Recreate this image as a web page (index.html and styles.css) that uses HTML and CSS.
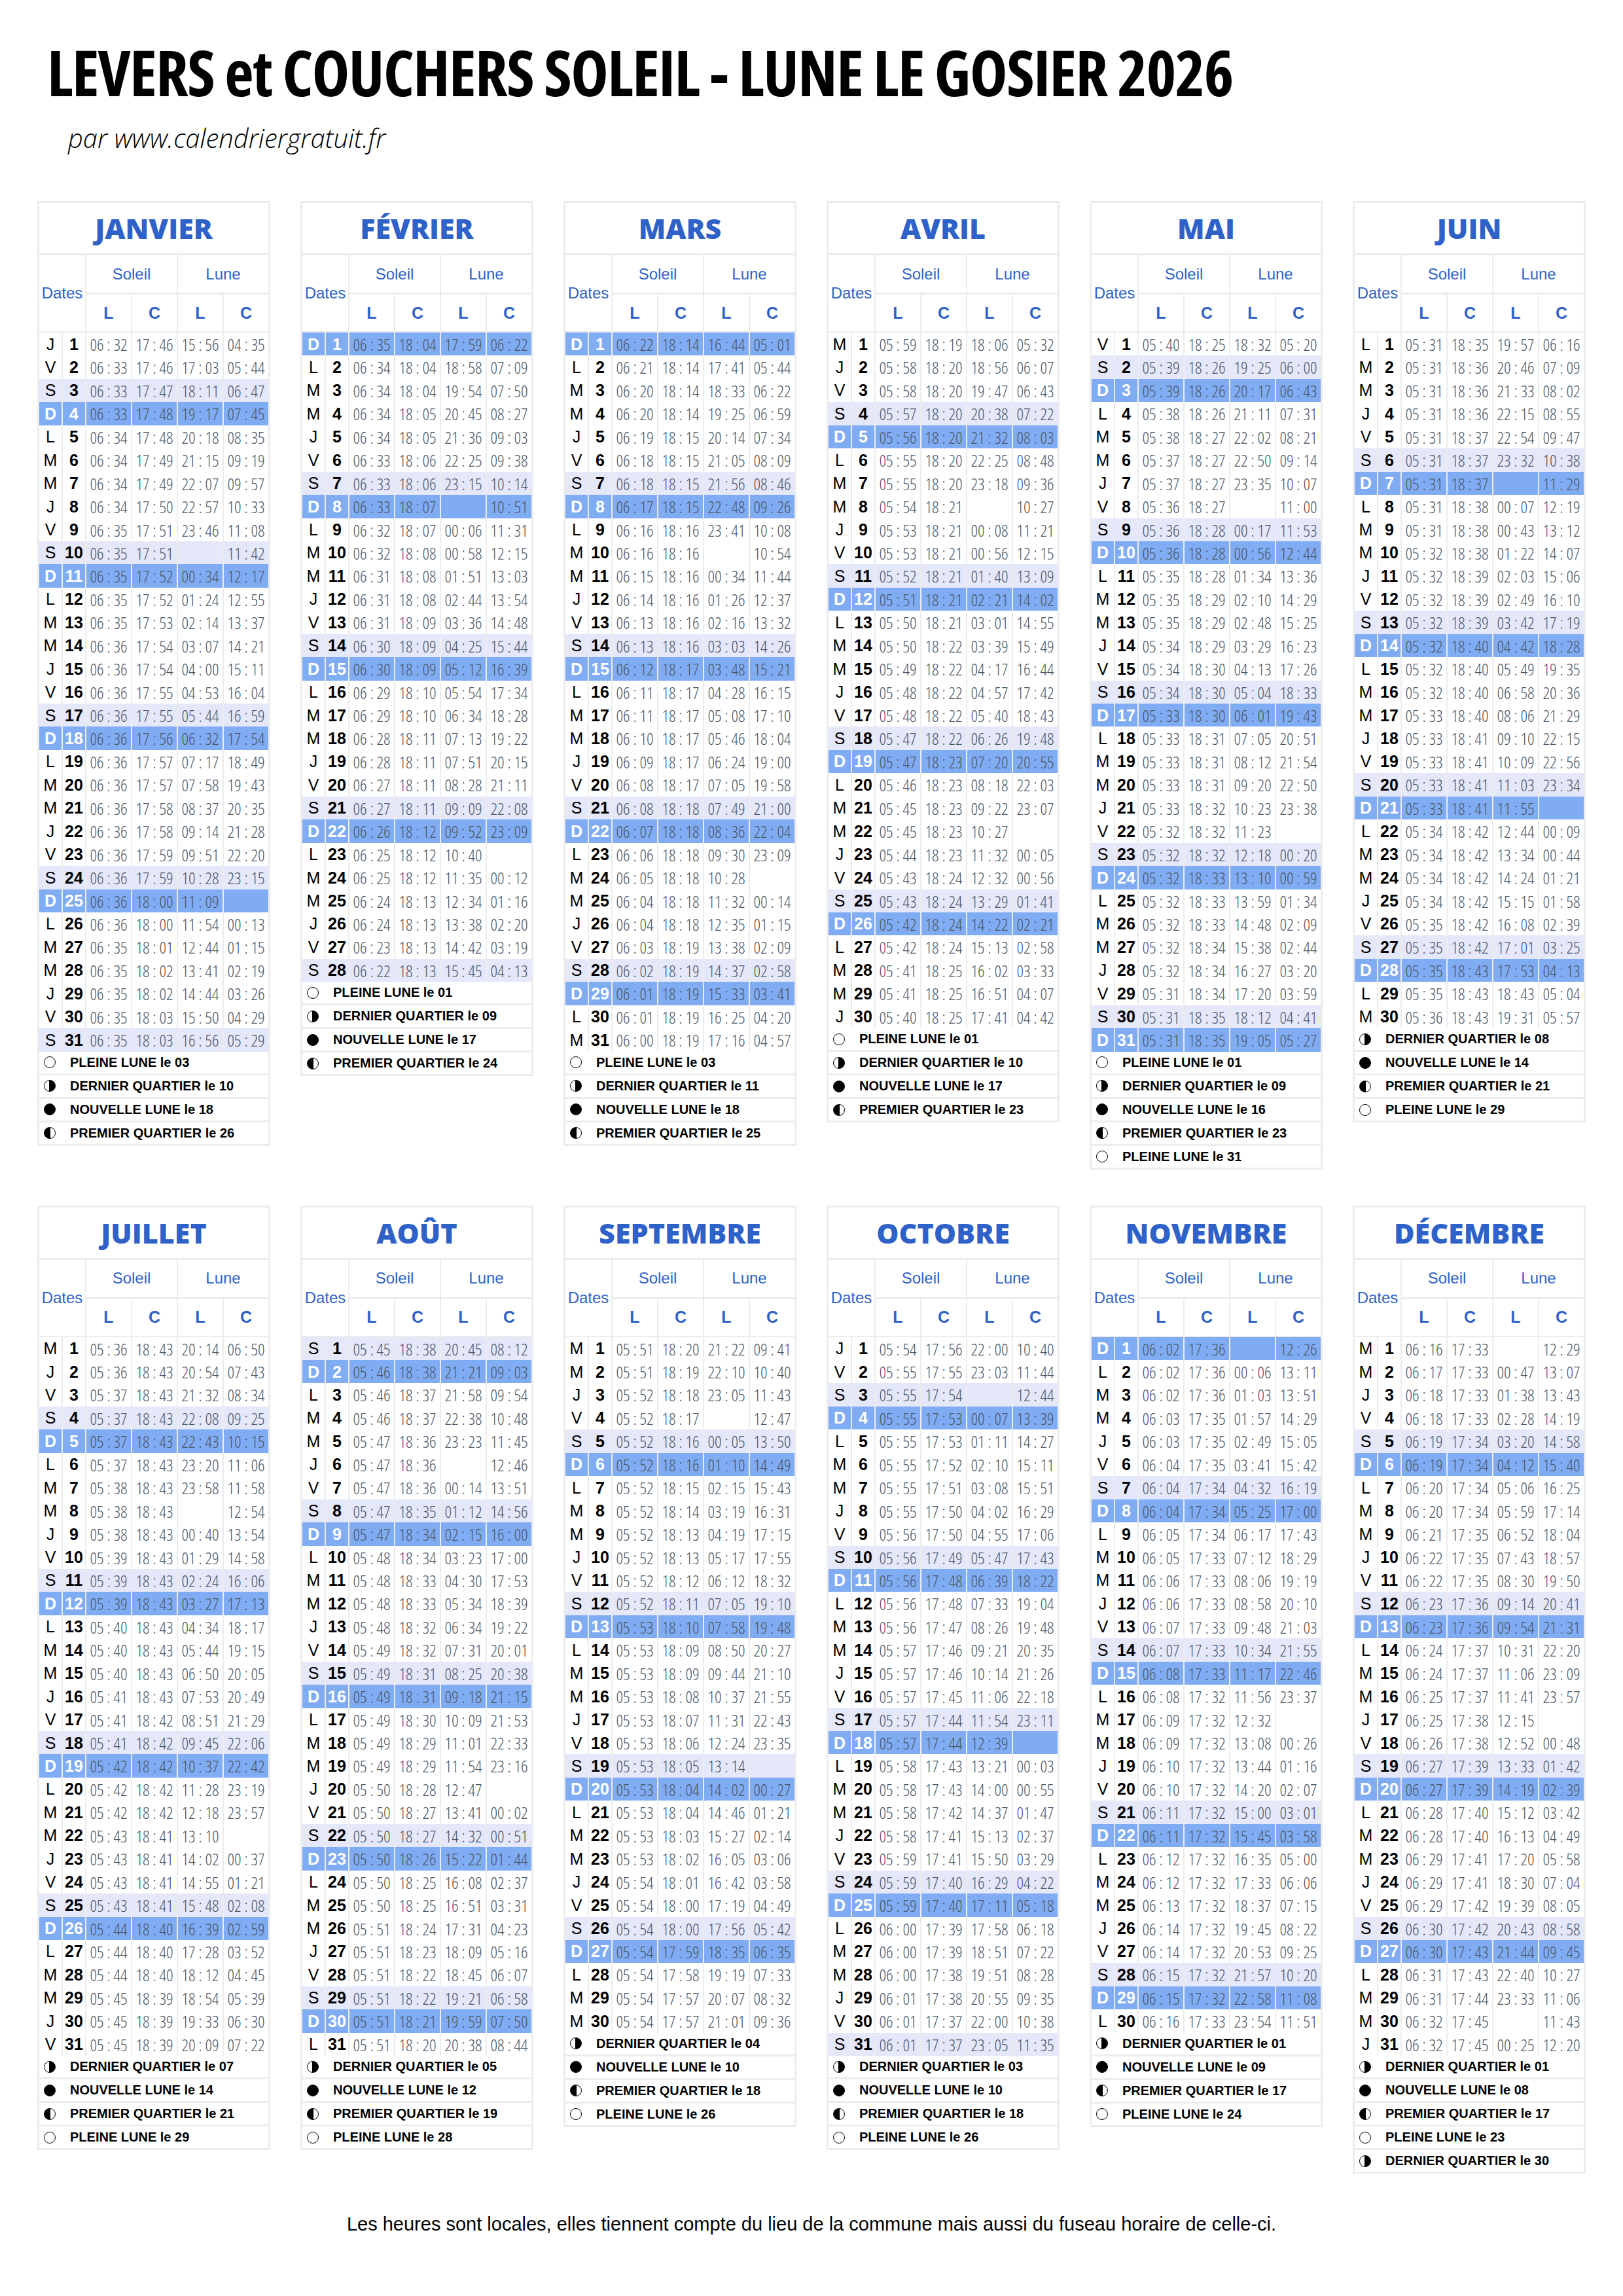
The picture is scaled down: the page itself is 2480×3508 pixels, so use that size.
FILE: index.html
```html
<!DOCTYPE html>
<html lang="fr">
<head>
<meta charset="utf-8">
<title>Levers et couchers soleil - lune Le Gosier 2026</title>
<link rel="stylesheet" href="styles.css">
</head>
<body>
<header class="top">
<h1 class="title">LEVERS et COUCHERS SOLEIL - LUNE LE GOSIER 2026</h1>
<p class="sub">par www.calendriergratuit.fr</p>
</header>
<main class="cal">

<section class="m">
<div class="mt">JANVIER</div>
<div class="h"><div class="dt">Dates</div><div class="so">Soleil</div><div class="lu">Lune</div><div class="lc">L</div><div class="lc">C</div><div class="lc">L</div><div class="lc">C</div></div>
<div class="r"><b>J</b><b>1</b><i>06 : 32</i><i>17 : 46</i><i>15 : 56</i><i>04 : 35</i></div>
<div class="r"><b>V</b><b>2</b><i>06 : 33</i><i>17 : 46</i><i>17 : 03</i><i>05 : 44</i></div>
<div class="r s"><b>S</b><b>3</b><i>06 : 33</i><i>17 : 47</i><i>18 : 11</i><i>06 : 47</i></div>
<div class="r d"><b>D</b><b>4</b><i>06 : 33</i><i>17 : 48</i><i>19 : 17</i><i>07 : 45</i></div>
<div class="r"><b>L</b><b>5</b><i>06 : 34</i><i>17 : 48</i><i>20 : 18</i><i>08 : 35</i></div>
<div class="r"><b>M</b><b>6</b><i>06 : 34</i><i>17 : 49</i><i>21 : 15</i><i>09 : 19</i></div>
<div class="r"><b>M</b><b>7</b><i>06 : 34</i><i>17 : 49</i><i>22 : 07</i><i>09 : 57</i></div>
<div class="r"><b>J</b><b>8</b><i>06 : 34</i><i>17 : 50</i><i>22 : 57</i><i>10 : 33</i></div>
<div class="r"><b>V</b><b>9</b><i>06 : 35</i><i>17 : 51</i><i>23 : 46</i><i>11 : 08</i></div>
<div class="r s"><b>S</b><b>10</b><i>06 : 35</i><i>17 : 51</i><i></i><i>11 : 42</i></div>
<div class="r d"><b>D</b><b>11</b><i>06 : 35</i><i>17 : 52</i><i>00 : 34</i><i>12 : 17</i></div>
<div class="r"><b>L</b><b>12</b><i>06 : 35</i><i>17 : 52</i><i>01 : 24</i><i>12 : 55</i></div>
<div class="r"><b>M</b><b>13</b><i>06 : 35</i><i>17 : 53</i><i>02 : 14</i><i>13 : 37</i></div>
<div class="r"><b>M</b><b>14</b><i>06 : 36</i><i>17 : 54</i><i>03 : 07</i><i>14 : 21</i></div>
<div class="r"><b>J</b><b>15</b><i>06 : 36</i><i>17 : 54</i><i>04 : 00</i><i>15 : 11</i></div>
<div class="r"><b>V</b><b>16</b><i>06 : 36</i><i>17 : 55</i><i>04 : 53</i><i>16 : 04</i></div>
<div class="r s"><b>S</b><b>17</b><i>06 : 36</i><i>17 : 55</i><i>05 : 44</i><i>16 : 59</i></div>
<div class="r d"><b>D</b><b>18</b><i>06 : 36</i><i>17 : 56</i><i>06 : 32</i><i>17 : 54</i></div>
<div class="r"><b>L</b><b>19</b><i>06 : 36</i><i>17 : 57</i><i>07 : 17</i><i>18 : 49</i></div>
<div class="r"><b>M</b><b>20</b><i>06 : 36</i><i>17 : 57</i><i>07 : 58</i><i>19 : 43</i></div>
<div class="r"><b>M</b><b>21</b><i>06 : 36</i><i>17 : 58</i><i>08 : 37</i><i>20 : 35</i></div>
<div class="r"><b>J</b><b>22</b><i>06 : 36</i><i>17 : 58</i><i>09 : 14</i><i>21 : 28</i></div>
<div class="r"><b>V</b><b>23</b><i>06 : 36</i><i>17 : 59</i><i>09 : 51</i><i>22 : 20</i></div>
<div class="r s"><b>S</b><b>24</b><i>06 : 36</i><i>17 : 59</i><i>10 : 28</i><i>23 : 15</i></div>
<div class="r d"><b>D</b><b>25</b><i>06 : 36</i><i>18 : 00</i><i>11 : 09</i><i></i></div>
<div class="r"><b>L</b><b>26</b><i>06 : 36</i><i>18 : 00</i><i>11 : 54</i><i>00 : 13</i></div>
<div class="r"><b>M</b><b>27</b><i>06 : 35</i><i>18 : 01</i><i>12 : 44</i><i>01 : 15</i></div>
<div class="r"><b>M</b><b>28</b><i>06 : 35</i><i>18 : 02</i><i>13 : 41</i><i>02 : 19</i></div>
<div class="r"><b>J</b><b>29</b><i>06 : 35</i><i>18 : 02</i><i>14 : 44</i><i>03 : 26</i></div>
<div class="r"><b>V</b><b>30</b><i>06 : 35</i><i>18 : 03</i><i>15 : 50</i><i>04 : 29</i></div>
<div class="r s"><b>S</b><b>31</b><i>06 : 35</i><i>18 : 03</i><i>16 : 56</i><i>05 : 29</i></div>
<div class="lg">
<div><span class="ic pl"></span>PLEINE LUNE le 03</div>
<div><span class="ic dq"></span>DERNIER QUARTIER le 10</div>
<div><span class="ic nl"></span>NOUVELLE LUNE le 18</div>
<div><span class="ic pq"></span>PREMIER QUARTIER le 26</div>
</div>
</section>

<section class="m">
<div class="mt">FÉVRIER</div>
<div class="h"><div class="dt">Dates</div><div class="so">Soleil</div><div class="lu">Lune</div><div class="lc">L</div><div class="lc">C</div><div class="lc">L</div><div class="lc">C</div></div>
<div class="r d"><b>D</b><b>1</b><i>06 : 35</i><i>18 : 04</i><i>17 : 59</i><i>06 : 22</i></div>
<div class="r"><b>L</b><b>2</b><i>06 : 34</i><i>18 : 04</i><i>18 : 58</i><i>07 : 09</i></div>
<div class="r"><b>M</b><b>3</b><i>06 : 34</i><i>18 : 04</i><i>19 : 54</i><i>07 : 50</i></div>
<div class="r"><b>M</b><b>4</b><i>06 : 34</i><i>18 : 05</i><i>20 : 45</i><i>08 : 27</i></div>
<div class="r"><b>J</b><b>5</b><i>06 : 34</i><i>18 : 05</i><i>21 : 36</i><i>09 : 03</i></div>
<div class="r"><b>V</b><b>6</b><i>06 : 33</i><i>18 : 06</i><i>22 : 25</i><i>09 : 38</i></div>
<div class="r s"><b>S</b><b>7</b><i>06 : 33</i><i>18 : 06</i><i>23 : 15</i><i>10 : 14</i></div>
<div class="r d"><b>D</b><b>8</b><i>06 : 33</i><i>18 : 07</i><i></i><i>10 : 51</i></div>
<div class="r"><b>L</b><b>9</b><i>06 : 32</i><i>18 : 07</i><i>00 : 06</i><i>11 : 31</i></div>
<div class="r"><b>M</b><b>10</b><i>06 : 32</i><i>18 : 08</i><i>00 : 58</i><i>12 : 15</i></div>
<div class="r"><b>M</b><b>11</b><i>06 : 31</i><i>18 : 08</i><i>01 : 51</i><i>13 : 03</i></div>
<div class="r"><b>J</b><b>12</b><i>06 : 31</i><i>18 : 08</i><i>02 : 44</i><i>13 : 54</i></div>
<div class="r"><b>V</b><b>13</b><i>06 : 31</i><i>18 : 09</i><i>03 : 36</i><i>14 : 48</i></div>
<div class="r s"><b>S</b><b>14</b><i>06 : 30</i><i>18 : 09</i><i>04 : 25</i><i>15 : 44</i></div>
<div class="r d"><b>D</b><b>15</b><i>06 : 30</i><i>18 : 09</i><i>05 : 12</i><i>16 : 39</i></div>
<div class="r"><b>L</b><b>16</b><i>06 : 29</i><i>18 : 10</i><i>05 : 54</i><i>17 : 34</i></div>
<div class="r"><b>M</b><b>17</b><i>06 : 29</i><i>18 : 10</i><i>06 : 34</i><i>18 : 28</i></div>
<div class="r"><b>M</b><b>18</b><i>06 : 28</i><i>18 : 11</i><i>07 : 13</i><i>19 : 22</i></div>
<div class="r"><b>J</b><b>19</b><i>06 : 28</i><i>18 : 11</i><i>07 : 51</i><i>20 : 15</i></div>
<div class="r"><b>V</b><b>20</b><i>06 : 27</i><i>18 : 11</i><i>08 : 28</i><i>21 : 11</i></div>
<div class="r s"><b>S</b><b>21</b><i>06 : 27</i><i>18 : 11</i><i>09 : 09</i><i>22 : 08</i></div>
<div class="r d"><b>D</b><b>22</b><i>06 : 26</i><i>18 : 12</i><i>09 : 52</i><i>23 : 09</i></div>
<div class="r"><b>L</b><b>23</b><i>06 : 25</i><i>18 : 12</i><i>10 : 40</i><i></i></div>
<div class="r"><b>M</b><b>24</b><i>06 : 25</i><i>18 : 12</i><i>11 : 35</i><i>00 : 12</i></div>
<div class="r"><b>M</b><b>25</b><i>06 : 24</i><i>18 : 13</i><i>12 : 34</i><i>01 : 16</i></div>
<div class="r"><b>J</b><b>26</b><i>06 : 24</i><i>18 : 13</i><i>13 : 38</i><i>02 : 20</i></div>
<div class="r"><b>V</b><b>27</b><i>06 : 23</i><i>18 : 13</i><i>14 : 42</i><i>03 : 19</i></div>
<div class="r s"><b>S</b><b>28</b><i>06 : 22</i><i>18 : 13</i><i>15 : 45</i><i>04 : 13</i></div>
<div class="lg">
<div><span class="ic pl"></span>PLEINE LUNE le 01</div>
<div><span class="ic dq"></span>DERNIER QUARTIER le 09</div>
<div><span class="ic nl"></span>NOUVELLE LUNE le 17</div>
<div><span class="ic pq"></span>PREMIER QUARTIER le 24</div>
</div>
</section>

<section class="m">
<div class="mt">MARS</div>
<div class="h"><div class="dt">Dates</div><div class="so">Soleil</div><div class="lu">Lune</div><div class="lc">L</div><div class="lc">C</div><div class="lc">L</div><div class="lc">C</div></div>
<div class="r d"><b>D</b><b>1</b><i>06 : 22</i><i>18 : 14</i><i>16 : 44</i><i>05 : 01</i></div>
<div class="r"><b>L</b><b>2</b><i>06 : 21</i><i>18 : 14</i><i>17 : 41</i><i>05 : 44</i></div>
<div class="r"><b>M</b><b>3</b><i>06 : 20</i><i>18 : 14</i><i>18 : 33</i><i>06 : 22</i></div>
<div class="r"><b>M</b><b>4</b><i>06 : 20</i><i>18 : 14</i><i>19 : 25</i><i>06 : 59</i></div>
<div class="r"><b>J</b><b>5</b><i>06 : 19</i><i>18 : 15</i><i>20 : 14</i><i>07 : 34</i></div>
<div class="r"><b>V</b><b>6</b><i>06 : 18</i><i>18 : 15</i><i>21 : 05</i><i>08 : 09</i></div>
<div class="r s"><b>S</b><b>7</b><i>06 : 18</i><i>18 : 15</i><i>21 : 56</i><i>08 : 46</i></div>
<div class="r d"><b>D</b><b>8</b><i>06 : 17</i><i>18 : 15</i><i>22 : 48</i><i>09 : 26</i></div>
<div class="r"><b>L</b><b>9</b><i>06 : 16</i><i>18 : 16</i><i>23 : 41</i><i>10 : 08</i></div>
<div class="r"><b>M</b><b>10</b><i>06 : 16</i><i>18 : 16</i><i></i><i>10 : 54</i></div>
<div class="r"><b>M</b><b>11</b><i>06 : 15</i><i>18 : 16</i><i>00 : 34</i><i>11 : 44</i></div>
<div class="r"><b>J</b><b>12</b><i>06 : 14</i><i>18 : 16</i><i>01 : 26</i><i>12 : 37</i></div>
<div class="r"><b>V</b><b>13</b><i>06 : 13</i><i>18 : 16</i><i>02 : 16</i><i>13 : 32</i></div>
<div class="r s"><b>S</b><b>14</b><i>06 : 13</i><i>18 : 16</i><i>03 : 03</i><i>14 : 26</i></div>
<div class="r d"><b>D</b><b>15</b><i>06 : 12</i><i>18 : 17</i><i>03 : 48</i><i>15 : 21</i></div>
<div class="r"><b>L</b><b>16</b><i>06 : 11</i><i>18 : 17</i><i>04 : 28</i><i>16 : 15</i></div>
<div class="r"><b>M</b><b>17</b><i>06 : 11</i><i>18 : 17</i><i>05 : 08</i><i>17 : 10</i></div>
<div class="r"><b>M</b><b>18</b><i>06 : 10</i><i>18 : 17</i><i>05 : 46</i><i>18 : 04</i></div>
<div class="r"><b>J</b><b>19</b><i>06 : 09</i><i>18 : 17</i><i>06 : 24</i><i>19 : 00</i></div>
<div class="r"><b>V</b><b>20</b><i>06 : 08</i><i>18 : 17</i><i>07 : 05</i><i>19 : 58</i></div>
<div class="r s"><b>S</b><b>21</b><i>06 : 08</i><i>18 : 18</i><i>07 : 49</i><i>21 : 00</i></div>
<div class="r d"><b>D</b><b>22</b><i>06 : 07</i><i>18 : 18</i><i>08 : 36</i><i>22 : 04</i></div>
<div class="r"><b>L</b><b>23</b><i>06 : 06</i><i>18 : 18</i><i>09 : 30</i><i>23 : 09</i></div>
<div class="r"><b>M</b><b>24</b><i>06 : 05</i><i>18 : 18</i><i>10 : 28</i><i></i></div>
<div class="r"><b>M</b><b>25</b><i>06 : 04</i><i>18 : 18</i><i>11 : 32</i><i>00 : 14</i></div>
<div class="r"><b>J</b><b>26</b><i>06 : 04</i><i>18 : 18</i><i>12 : 35</i><i>01 : 15</i></div>
<div class="r"><b>V</b><b>27</b><i>06 : 03</i><i>18 : 19</i><i>13 : 38</i><i>02 : 09</i></div>
<div class="r s"><b>S</b><b>28</b><i>06 : 02</i><i>18 : 19</i><i>14 : 37</i><i>02 : 58</i></div>
<div class="r d"><b>D</b><b>29</b><i>06 : 01</i><i>18 : 19</i><i>15 : 33</i><i>03 : 41</i></div>
<div class="r"><b>L</b><b>30</b><i>06 : 01</i><i>18 : 19</i><i>16 : 25</i><i>04 : 20</i></div>
<div class="r"><b>M</b><b>31</b><i>06 : 00</i><i>18 : 19</i><i>17 : 16</i><i>04 : 57</i></div>
<div class="lg">
<div><span class="ic pl"></span>PLEINE LUNE le 03</div>
<div><span class="ic dq"></span>DERNIER QUARTIER le 11</div>
<div><span class="ic nl"></span>NOUVELLE LUNE le 18</div>
<div><span class="ic pq"></span>PREMIER QUARTIER le 25</div>
</div>
</section>

<section class="m">
<div class="mt">AVRIL</div>
<div class="h"><div class="dt">Dates</div><div class="so">Soleil</div><div class="lu">Lune</div><div class="lc">L</div><div class="lc">C</div><div class="lc">L</div><div class="lc">C</div></div>
<div class="r"><b>M</b><b>1</b><i>05 : 59</i><i>18 : 19</i><i>18 : 06</i><i>05 : 32</i></div>
<div class="r"><b>J</b><b>2</b><i>05 : 58</i><i>18 : 20</i><i>18 : 56</i><i>06 : 07</i></div>
<div class="r"><b>V</b><b>3</b><i>05 : 58</i><i>18 : 20</i><i>19 : 47</i><i>06 : 43</i></div>
<div class="r s"><b>S</b><b>4</b><i>05 : 57</i><i>18 : 20</i><i>20 : 38</i><i>07 : 22</i></div>
<div class="r d"><b>D</b><b>5</b><i>05 : 56</i><i>18 : 20</i><i>21 : 32</i><i>08 : 03</i></div>
<div class="r"><b>L</b><b>6</b><i>05 : 55</i><i>18 : 20</i><i>22 : 25</i><i>08 : 48</i></div>
<div class="r"><b>M</b><b>7</b><i>05 : 55</i><i>18 : 20</i><i>23 : 18</i><i>09 : 36</i></div>
<div class="r"><b>M</b><b>8</b><i>05 : 54</i><i>18 : 21</i><i></i><i>10 : 27</i></div>
<div class="r"><b>J</b><b>9</b><i>05 : 53</i><i>18 : 21</i><i>00 : 08</i><i>11 : 21</i></div>
<div class="r"><b>V</b><b>10</b><i>05 : 53</i><i>18 : 21</i><i>00 : 56</i><i>12 : 15</i></div>
<div class="r s"><b>S</b><b>11</b><i>05 : 52</i><i>18 : 21</i><i>01 : 40</i><i>13 : 09</i></div>
<div class="r d"><b>D</b><b>12</b><i>05 : 51</i><i>18 : 21</i><i>02 : 21</i><i>14 : 02</i></div>
<div class="r"><b>L</b><b>13</b><i>05 : 50</i><i>18 : 21</i><i>03 : 01</i><i>14 : 55</i></div>
<div class="r"><b>M</b><b>14</b><i>05 : 50</i><i>18 : 22</i><i>03 : 39</i><i>15 : 49</i></div>
<div class="r"><b>M</b><b>15</b><i>05 : 49</i><i>18 : 22</i><i>04 : 17</i><i>16 : 44</i></div>
<div class="r"><b>J</b><b>16</b><i>05 : 48</i><i>18 : 22</i><i>04 : 57</i><i>17 : 42</i></div>
<div class="r"><b>V</b><b>17</b><i>05 : 48</i><i>18 : 22</i><i>05 : 40</i><i>18 : 43</i></div>
<div class="r s"><b>S</b><b>18</b><i>05 : 47</i><i>18 : 22</i><i>06 : 26</i><i>19 : 48</i></div>
<div class="r d"><b>D</b><b>19</b><i>05 : 47</i><i>18 : 23</i><i>07 : 20</i><i>20 : 55</i></div>
<div class="r"><b>L</b><b>20</b><i>05 : 46</i><i>18 : 23</i><i>08 : 18</i><i>22 : 03</i></div>
<div class="r"><b>M</b><b>21</b><i>05 : 45</i><i>18 : 23</i><i>09 : 22</i><i>23 : 07</i></div>
<div class="r"><b>M</b><b>22</b><i>05 : 45</i><i>18 : 23</i><i>10 : 27</i><i></i></div>
<div class="r"><b>J</b><b>23</b><i>05 : 44</i><i>18 : 23</i><i>11 : 32</i><i>00 : 05</i></div>
<div class="r"><b>V</b><b>24</b><i>05 : 43</i><i>18 : 24</i><i>12 : 32</i><i>00 : 56</i></div>
<div class="r s"><b>S</b><b>25</b><i>05 : 43</i><i>18 : 24</i><i>13 : 29</i><i>01 : 41</i></div>
<div class="r d"><b>D</b><b>26</b><i>05 : 42</i><i>18 : 24</i><i>14 : 22</i><i>02 : 21</i></div>
<div class="r"><b>L</b><b>27</b><i>05 : 42</i><i>18 : 24</i><i>15 : 13</i><i>02 : 58</i></div>
<div class="r"><b>M</b><b>28</b><i>05 : 41</i><i>18 : 25</i><i>16 : 02</i><i>03 : 33</i></div>
<div class="r"><b>M</b><b>29</b><i>05 : 41</i><i>18 : 25</i><i>16 : 51</i><i>04 : 07</i></div>
<div class="r"><b>J</b><b>30</b><i>05 : 40</i><i>18 : 25</i><i>17 : 41</i><i>04 : 42</i></div>
<div class="lg">
<div><span class="ic pl"></span>PLEINE LUNE le 01</div>
<div><span class="ic dq"></span>DERNIER QUARTIER le 10</div>
<div><span class="ic nl"></span>NOUVELLE LUNE le 17</div>
<div><span class="ic pq"></span>PREMIER QUARTIER le 23</div>
</div>
</section>

<section class="m">
<div class="mt">MAI</div>
<div class="h"><div class="dt">Dates</div><div class="so">Soleil</div><div class="lu">Lune</div><div class="lc">L</div><div class="lc">C</div><div class="lc">L</div><div class="lc">C</div></div>
<div class="r"><b>V</b><b>1</b><i>05 : 40</i><i>18 : 25</i><i>18 : 32</i><i>05 : 20</i></div>
<div class="r s"><b>S</b><b>2</b><i>05 : 39</i><i>18 : 26</i><i>19 : 25</i><i>06 : 00</i></div>
<div class="r d"><b>D</b><b>3</b><i>05 : 39</i><i>18 : 26</i><i>20 : 17</i><i>06 : 43</i></div>
<div class="r"><b>L</b><b>4</b><i>05 : 38</i><i>18 : 26</i><i>21 : 11</i><i>07 : 31</i></div>
<div class="r"><b>M</b><b>5</b><i>05 : 38</i><i>18 : 27</i><i>22 : 02</i><i>08 : 21</i></div>
<div class="r"><b>M</b><b>6</b><i>05 : 37</i><i>18 : 27</i><i>22 : 50</i><i>09 : 14</i></div>
<div class="r"><b>J</b><b>7</b><i>05 : 37</i><i>18 : 27</i><i>23 : 35</i><i>10 : 07</i></div>
<div class="r"><b>V</b><b>8</b><i>05 : 36</i><i>18 : 27</i><i></i><i>11 : 00</i></div>
<div class="r s"><b>S</b><b>9</b><i>05 : 36</i><i>18 : 28</i><i>00 : 17</i><i>11 : 53</i></div>
<div class="r d"><b>D</b><b>10</b><i>05 : 36</i><i>18 : 28</i><i>00 : 56</i><i>12 : 44</i></div>
<div class="r"><b>L</b><b>11</b><i>05 : 35</i><i>18 : 28</i><i>01 : 34</i><i>13 : 36</i></div>
<div class="r"><b>M</b><b>12</b><i>05 : 35</i><i>18 : 29</i><i>02 : 10</i><i>14 : 29</i></div>
<div class="r"><b>M</b><b>13</b><i>05 : 35</i><i>18 : 29</i><i>02 : 48</i><i>15 : 25</i></div>
<div class="r"><b>J</b><b>14</b><i>05 : 34</i><i>18 : 29</i><i>03 : 29</i><i>16 : 23</i></div>
<div class="r"><b>V</b><b>15</b><i>05 : 34</i><i>18 : 30</i><i>04 : 13</i><i>17 : 26</i></div>
<div class="r s"><b>S</b><b>16</b><i>05 : 34</i><i>18 : 30</i><i>05 : 04</i><i>18 : 33</i></div>
<div class="r d"><b>D</b><b>17</b><i>05 : 33</i><i>18 : 30</i><i>06 : 01</i><i>19 : 43</i></div>
<div class="r"><b>L</b><b>18</b><i>05 : 33</i><i>18 : 31</i><i>07 : 05</i><i>20 : 51</i></div>
<div class="r"><b>M</b><b>19</b><i>05 : 33</i><i>18 : 31</i><i>08 : 12</i><i>21 : 54</i></div>
<div class="r"><b>M</b><b>20</b><i>05 : 33</i><i>18 : 31</i><i>09 : 20</i><i>22 : 50</i></div>
<div class="r"><b>J</b><b>21</b><i>05 : 33</i><i>18 : 32</i><i>10 : 23</i><i>23 : 38</i></div>
<div class="r"><b>V</b><b>22</b><i>05 : 32</i><i>18 : 32</i><i>11 : 23</i><i></i></div>
<div class="r s"><b>S</b><b>23</b><i>05 : 32</i><i>18 : 32</i><i>12 : 18</i><i>00 : 20</i></div>
<div class="r d"><b>D</b><b>24</b><i>05 : 32</i><i>18 : 33</i><i>13 : 10</i><i>00 : 59</i></div>
<div class="r"><b>L</b><b>25</b><i>05 : 32</i><i>18 : 33</i><i>13 : 59</i><i>01 : 34</i></div>
<div class="r"><b>M</b><b>26</b><i>05 : 32</i><i>18 : 33</i><i>14 : 48</i><i>02 : 09</i></div>
<div class="r"><b>M</b><b>27</b><i>05 : 32</i><i>18 : 34</i><i>15 : 38</i><i>02 : 44</i></div>
<div class="r"><b>J</b><b>28</b><i>05 : 32</i><i>18 : 34</i><i>16 : 27</i><i>03 : 20</i></div>
<div class="r"><b>V</b><b>29</b><i>05 : 31</i><i>18 : 34</i><i>17 : 20</i><i>03 : 59</i></div>
<div class="r s"><b>S</b><b>30</b><i>05 : 31</i><i>18 : 35</i><i>18 : 12</i><i>04 : 41</i></div>
<div class="r d"><b>D</b><b>31</b><i>05 : 31</i><i>18 : 35</i><i>19 : 05</i><i>05 : 27</i></div>
<div class="lg">
<div><span class="ic pl"></span>PLEINE LUNE le 01</div>
<div><span class="ic dq"></span>DERNIER QUARTIER le 09</div>
<div><span class="ic nl"></span>NOUVELLE LUNE le 16</div>
<div><span class="ic pq"></span>PREMIER QUARTIER le 23</div>
<div><span class="ic pl"></span>PLEINE LUNE le 31</div>
</div>
</section>

<section class="m">
<div class="mt">JUIN</div>
<div class="h"><div class="dt">Dates</div><div class="so">Soleil</div><div class="lu">Lune</div><div class="lc">L</div><div class="lc">C</div><div class="lc">L</div><div class="lc">C</div></div>
<div class="r"><b>L</b><b>1</b><i>05 : 31</i><i>18 : 35</i><i>19 : 57</i><i>06 : 16</i></div>
<div class="r"><b>M</b><b>2</b><i>05 : 31</i><i>18 : 36</i><i>20 : 46</i><i>07 : 09</i></div>
<div class="r"><b>M</b><b>3</b><i>05 : 31</i><i>18 : 36</i><i>21 : 33</i><i>08 : 02</i></div>
<div class="r"><b>J</b><b>4</b><i>05 : 31</i><i>18 : 36</i><i>22 : 15</i><i>08 : 55</i></div>
<div class="r"><b>V</b><b>5</b><i>05 : 31</i><i>18 : 37</i><i>22 : 54</i><i>09 : 47</i></div>
<div class="r s"><b>S</b><b>6</b><i>05 : 31</i><i>18 : 37</i><i>23 : 32</i><i>10 : 38</i></div>
<div class="r d"><b>D</b><b>7</b><i>05 : 31</i><i>18 : 37</i><i></i><i>11 : 29</i></div>
<div class="r"><b>L</b><b>8</b><i>05 : 31</i><i>18 : 38</i><i>00 : 07</i><i>12 : 19</i></div>
<div class="r"><b>M</b><b>9</b><i>05 : 31</i><i>18 : 38</i><i>00 : 43</i><i>13 : 12</i></div>
<div class="r"><b>M</b><b>10</b><i>05 : 32</i><i>18 : 38</i><i>01 : 22</i><i>14 : 07</i></div>
<div class="r"><b>J</b><b>11</b><i>05 : 32</i><i>18 : 39</i><i>02 : 03</i><i>15 : 06</i></div>
<div class="r"><b>V</b><b>12</b><i>05 : 32</i><i>18 : 39</i><i>02 : 49</i><i>16 : 10</i></div>
<div class="r s"><b>S</b><b>13</b><i>05 : 32</i><i>18 : 39</i><i>03 : 42</i><i>17 : 19</i></div>
<div class="r d"><b>D</b><b>14</b><i>05 : 32</i><i>18 : 40</i><i>04 : 42</i><i>18 : 28</i></div>
<div class="r"><b>L</b><b>15</b><i>05 : 32</i><i>18 : 40</i><i>05 : 49</i><i>19 : 35</i></div>
<div class="r"><b>M</b><b>16</b><i>05 : 32</i><i>18 : 40</i><i>06 : 58</i><i>20 : 36</i></div>
<div class="r"><b>M</b><b>17</b><i>05 : 33</i><i>18 : 40</i><i>08 : 06</i><i>21 : 29</i></div>
<div class="r"><b>J</b><b>18</b><i>05 : 33</i><i>18 : 41</i><i>09 : 10</i><i>22 : 15</i></div>
<div class="r"><b>V</b><b>19</b><i>05 : 33</i><i>18 : 41</i><i>10 : 09</i><i>22 : 56</i></div>
<div class="r s"><b>S</b><b>20</b><i>05 : 33</i><i>18 : 41</i><i>11 : 03</i><i>23 : 34</i></div>
<div class="r d"><b>D</b><b>21</b><i>05 : 33</i><i>18 : 41</i><i>11 : 55</i><i></i></div>
<div class="r"><b>L</b><b>22</b><i>05 : 34</i><i>18 : 42</i><i>12 : 44</i><i>00 : 09</i></div>
<div class="r"><b>M</b><b>23</b><i>05 : 34</i><i>18 : 42</i><i>13 : 34</i><i>00 : 44</i></div>
<div class="r"><b>M</b><b>24</b><i>05 : 34</i><i>18 : 42</i><i>14 : 24</i><i>01 : 21</i></div>
<div class="r"><b>J</b><b>25</b><i>05 : 34</i><i>18 : 42</i><i>15 : 15</i><i>01 : 58</i></div>
<div class="r"><b>V</b><b>26</b><i>05 : 35</i><i>18 : 42</i><i>16 : 08</i><i>02 : 39</i></div>
<div class="r s"><b>S</b><b>27</b><i>05 : 35</i><i>18 : 42</i><i>17 : 01</i><i>03 : 25</i></div>
<div class="r d"><b>D</b><b>28</b><i>05 : 35</i><i>18 : 43</i><i>17 : 53</i><i>04 : 13</i></div>
<div class="r"><b>L</b><b>29</b><i>05 : 35</i><i>18 : 43</i><i>18 : 43</i><i>05 : 04</i></div>
<div class="r"><b>M</b><b>30</b><i>05 : 36</i><i>18 : 43</i><i>19 : 31</i><i>05 : 57</i></div>
<div class="lg">
<div><span class="ic dq"></span>DERNIER QUARTIER le 08</div>
<div><span class="ic nl"></span>NOUVELLE LUNE le 14</div>
<div><span class="ic pq"></span>PREMIER QUARTIER le 21</div>
<div><span class="ic pl"></span>PLEINE LUNE le 29</div>
</div>
</section>

<section class="m">
<div class="mt">JUILLET</div>
<div class="h"><div class="dt">Dates</div><div class="so">Soleil</div><div class="lu">Lune</div><div class="lc">L</div><div class="lc">C</div><div class="lc">L</div><div class="lc">C</div></div>
<div class="r"><b>M</b><b>1</b><i>05 : 36</i><i>18 : 43</i><i>20 : 14</i><i>06 : 50</i></div>
<div class="r"><b>J</b><b>2</b><i>05 : 36</i><i>18 : 43</i><i>20 : 54</i><i>07 : 43</i></div>
<div class="r"><b>V</b><b>3</b><i>05 : 37</i><i>18 : 43</i><i>21 : 32</i><i>08 : 34</i></div>
<div class="r s"><b>S</b><b>4</b><i>05 : 37</i><i>18 : 43</i><i>22 : 08</i><i>09 : 25</i></div>
<div class="r d"><b>D</b><b>5</b><i>05 : 37</i><i>18 : 43</i><i>22 : 43</i><i>10 : 15</i></div>
<div class="r"><b>L</b><b>6</b><i>05 : 37</i><i>18 : 43</i><i>23 : 20</i><i>11 : 06</i></div>
<div class="r"><b>M</b><b>7</b><i>05 : 38</i><i>18 : 43</i><i>23 : 58</i><i>11 : 58</i></div>
<div class="r"><b>M</b><b>8</b><i>05 : 38</i><i>18 : 43</i><i></i><i>12 : 54</i></div>
<div class="r"><b>J</b><b>9</b><i>05 : 38</i><i>18 : 43</i><i>00 : 40</i><i>13 : 54</i></div>
<div class="r"><b>V</b><b>10</b><i>05 : 39</i><i>18 : 43</i><i>01 : 29</i><i>14 : 58</i></div>
<div class="r s"><b>S</b><b>11</b><i>05 : 39</i><i>18 : 43</i><i>02 : 24</i><i>16 : 06</i></div>
<div class="r d"><b>D</b><b>12</b><i>05 : 39</i><i>18 : 43</i><i>03 : 27</i><i>17 : 13</i></div>
<div class="r"><b>L</b><b>13</b><i>05 : 40</i><i>18 : 43</i><i>04 : 34</i><i>18 : 17</i></div>
<div class="r"><b>M</b><b>14</b><i>05 : 40</i><i>18 : 43</i><i>05 : 44</i><i>19 : 15</i></div>
<div class="r"><b>M</b><b>15</b><i>05 : 40</i><i>18 : 43</i><i>06 : 50</i><i>20 : 05</i></div>
<div class="r"><b>J</b><b>16</b><i>05 : 41</i><i>18 : 43</i><i>07 : 53</i><i>20 : 49</i></div>
<div class="r"><b>V</b><b>17</b><i>05 : 41</i><i>18 : 42</i><i>08 : 51</i><i>21 : 29</i></div>
<div class="r s"><b>S</b><b>18</b><i>05 : 41</i><i>18 : 42</i><i>09 : 45</i><i>22 : 06</i></div>
<div class="r d"><b>D</b><b>19</b><i>05 : 42</i><i>18 : 42</i><i>10 : 37</i><i>22 : 42</i></div>
<div class="r"><b>L</b><b>20</b><i>05 : 42</i><i>18 : 42</i><i>11 : 28</i><i>23 : 19</i></div>
<div class="r"><b>M</b><b>21</b><i>05 : 42</i><i>18 : 42</i><i>12 : 18</i><i>23 : 57</i></div>
<div class="r"><b>M</b><b>22</b><i>05 : 43</i><i>18 : 41</i><i>13 : 10</i><i></i></div>
<div class="r"><b>J</b><b>23</b><i>05 : 43</i><i>18 : 41</i><i>14 : 02</i><i>00 : 37</i></div>
<div class="r"><b>V</b><b>24</b><i>05 : 43</i><i>18 : 41</i><i>14 : 55</i><i>01 : 21</i></div>
<div class="r s"><b>S</b><b>25</b><i>05 : 43</i><i>18 : 41</i><i>15 : 48</i><i>02 : 08</i></div>
<div class="r d"><b>D</b><b>26</b><i>05 : 44</i><i>18 : 40</i><i>16 : 39</i><i>02 : 59</i></div>
<div class="r"><b>L</b><b>27</b><i>05 : 44</i><i>18 : 40</i><i>17 : 28</i><i>03 : 52</i></div>
<div class="r"><b>M</b><b>28</b><i>05 : 44</i><i>18 : 40</i><i>18 : 12</i><i>04 : 45</i></div>
<div class="r"><b>M</b><b>29</b><i>05 : 45</i><i>18 : 39</i><i>18 : 54</i><i>05 : 39</i></div>
<div class="r"><b>J</b><b>30</b><i>05 : 45</i><i>18 : 39</i><i>19 : 33</i><i>06 : 30</i></div>
<div class="r"><b>V</b><b>31</b><i>05 : 45</i><i>18 : 39</i><i>20 : 09</i><i>07 : 22</i></div>
<div class="lg">
<div><span class="ic dq"></span>DERNIER QUARTIER le 07</div>
<div><span class="ic nl"></span>NOUVELLE LUNE le 14</div>
<div><span class="ic pq"></span>PREMIER QUARTIER le 21</div>
<div><span class="ic pl"></span>PLEINE LUNE le 29</div>
</div>
</section>

<section class="m">
<div class="mt">AOÛT</div>
<div class="h"><div class="dt">Dates</div><div class="so">Soleil</div><div class="lu">Lune</div><div class="lc">L</div><div class="lc">C</div><div class="lc">L</div><div class="lc">C</div></div>
<div class="r s"><b>S</b><b>1</b><i>05 : 45</i><i>18 : 38</i><i>20 : 45</i><i>08 : 12</i></div>
<div class="r d"><b>D</b><b>2</b><i>05 : 46</i><i>18 : 38</i><i>21 : 21</i><i>09 : 03</i></div>
<div class="r"><b>L</b><b>3</b><i>05 : 46</i><i>18 : 37</i><i>21 : 58</i><i>09 : 54</i></div>
<div class="r"><b>M</b><b>4</b><i>05 : 46</i><i>18 : 37</i><i>22 : 38</i><i>10 : 48</i></div>
<div class="r"><b>M</b><b>5</b><i>05 : 47</i><i>18 : 36</i><i>23 : 23</i><i>11 : 45</i></div>
<div class="r"><b>J</b><b>6</b><i>05 : 47</i><i>18 : 36</i><i></i><i>12 : 46</i></div>
<div class="r"><b>V</b><b>7</b><i>05 : 47</i><i>18 : 36</i><i>00 : 14</i><i>13 : 51</i></div>
<div class="r s"><b>S</b><b>8</b><i>05 : 47</i><i>18 : 35</i><i>01 : 12</i><i>14 : 56</i></div>
<div class="r d"><b>D</b><b>9</b><i>05 : 47</i><i>18 : 34</i><i>02 : 15</i><i>16 : 00</i></div>
<div class="r"><b>L</b><b>10</b><i>05 : 48</i><i>18 : 34</i><i>03 : 23</i><i>17 : 00</i></div>
<div class="r"><b>M</b><b>11</b><i>05 : 48</i><i>18 : 33</i><i>04 : 30</i><i>17 : 53</i></div>
<div class="r"><b>M</b><b>12</b><i>05 : 48</i><i>18 : 33</i><i>05 : 34</i><i>18 : 39</i></div>
<div class="r"><b>J</b><b>13</b><i>05 : 48</i><i>18 : 32</i><i>06 : 34</i><i>19 : 22</i></div>
<div class="r"><b>V</b><b>14</b><i>05 : 49</i><i>18 : 32</i><i>07 : 31</i><i>20 : 01</i></div>
<div class="r s"><b>S</b><b>15</b><i>05 : 49</i><i>18 : 31</i><i>08 : 25</i><i>20 : 38</i></div>
<div class="r d"><b>D</b><b>16</b><i>05 : 49</i><i>18 : 31</i><i>09 : 18</i><i>21 : 15</i></div>
<div class="r"><b>L</b><b>17</b><i>05 : 49</i><i>18 : 30</i><i>10 : 09</i><i>21 : 53</i></div>
<div class="r"><b>M</b><b>18</b><i>05 : 49</i><i>18 : 29</i><i>11 : 01</i><i>22 : 33</i></div>
<div class="r"><b>M</b><b>19</b><i>05 : 49</i><i>18 : 29</i><i>11 : 54</i><i>23 : 16</i></div>
<div class="r"><b>J</b><b>20</b><i>05 : 50</i><i>18 : 28</i><i>12 : 47</i><i></i></div>
<div class="r"><b>V</b><b>21</b><i>05 : 50</i><i>18 : 27</i><i>13 : 41</i><i>00 : 02</i></div>
<div class="r s"><b>S</b><b>22</b><i>05 : 50</i><i>18 : 27</i><i>14 : 32</i><i>00 : 51</i></div>
<div class="r d"><b>D</b><b>23</b><i>05 : 50</i><i>18 : 26</i><i>15 : 22</i><i>01 : 44</i></div>
<div class="r"><b>L</b><b>24</b><i>05 : 50</i><i>18 : 25</i><i>16 : 08</i><i>02 : 37</i></div>
<div class="r"><b>M</b><b>25</b><i>05 : 50</i><i>18 : 25</i><i>16 : 51</i><i>03 : 31</i></div>
<div class="r"><b>M</b><b>26</b><i>05 : 51</i><i>18 : 24</i><i>17 : 31</i><i>04 : 23</i></div>
<div class="r"><b>J</b><b>27</b><i>05 : 51</i><i>18 : 23</i><i>18 : 09</i><i>05 : 16</i></div>
<div class="r"><b>V</b><b>28</b><i>05 : 51</i><i>18 : 22</i><i>18 : 45</i><i>06 : 07</i></div>
<div class="r s"><b>S</b><b>29</b><i>05 : 51</i><i>18 : 22</i><i>19 : 21</i><i>06 : 58</i></div>
<div class="r d"><b>D</b><b>30</b><i>05 : 51</i><i>18 : 21</i><i>19 : 59</i><i>07 : 50</i></div>
<div class="r"><b>L</b><b>31</b><i>05 : 51</i><i>18 : 20</i><i>20 : 38</i><i>08 : 44</i></div>
<div class="lg">
<div><span class="ic dq"></span>DERNIER QUARTIER le 05</div>
<div><span class="ic nl"></span>NOUVELLE LUNE le 12</div>
<div><span class="ic pq"></span>PREMIER QUARTIER le 19</div>
<div><span class="ic pl"></span>PLEINE LUNE le 28</div>
</div>
</section>

<section class="m">
<div class="mt">SEPTEMBRE</div>
<div class="h"><div class="dt">Dates</div><div class="so">Soleil</div><div class="lu">Lune</div><div class="lc">L</div><div class="lc">C</div><div class="lc">L</div><div class="lc">C</div></div>
<div class="r"><b>M</b><b>1</b><i>05 : 51</i><i>18 : 20</i><i>21 : 22</i><i>09 : 41</i></div>
<div class="r"><b>M</b><b>2</b><i>05 : 51</i><i>18 : 19</i><i>22 : 10</i><i>10 : 40</i></div>
<div class="r"><b>J</b><b>3</b><i>05 : 52</i><i>18 : 18</i><i>23 : 05</i><i>11 : 43</i></div>
<div class="r"><b>V</b><b>4</b><i>05 : 52</i><i>18 : 17</i><i></i><i>12 : 47</i></div>
<div class="r s"><b>S</b><b>5</b><i>05 : 52</i><i>18 : 16</i><i>00 : 05</i><i>13 : 50</i></div>
<div class="r d"><b>D</b><b>6</b><i>05 : 52</i><i>18 : 16</i><i>01 : 10</i><i>14 : 49</i></div>
<div class="r"><b>L</b><b>7</b><i>05 : 52</i><i>18 : 15</i><i>02 : 15</i><i>15 : 43</i></div>
<div class="r"><b>M</b><b>8</b><i>05 : 52</i><i>18 : 14</i><i>03 : 19</i><i>16 : 31</i></div>
<div class="r"><b>M</b><b>9</b><i>05 : 52</i><i>18 : 13</i><i>04 : 19</i><i>17 : 15</i></div>
<div class="r"><b>J</b><b>10</b><i>05 : 52</i><i>18 : 13</i><i>05 : 17</i><i>17 : 55</i></div>
<div class="r"><b>V</b><b>11</b><i>05 : 52</i><i>18 : 12</i><i>06 : 12</i><i>18 : 32</i></div>
<div class="r s"><b>S</b><b>12</b><i>05 : 52</i><i>18 : 11</i><i>07 : 05</i><i>19 : 10</i></div>
<div class="r d"><b>D</b><b>13</b><i>05 : 53</i><i>18 : 10</i><i>07 : 58</i><i>19 : 48</i></div>
<div class="r"><b>L</b><b>14</b><i>05 : 53</i><i>18 : 09</i><i>08 : 50</i><i>20 : 27</i></div>
<div class="r"><b>M</b><b>15</b><i>05 : 53</i><i>18 : 09</i><i>09 : 44</i><i>21 : 10</i></div>
<div class="r"><b>M</b><b>16</b><i>05 : 53</i><i>18 : 08</i><i>10 : 37</i><i>21 : 55</i></div>
<div class="r"><b>J</b><b>17</b><i>05 : 53</i><i>18 : 07</i><i>11 : 31</i><i>22 : 43</i></div>
<div class="r"><b>V</b><b>18</b><i>05 : 53</i><i>18 : 06</i><i>12 : 24</i><i>23 : 35</i></div>
<div class="r s"><b>S</b><b>19</b><i>05 : 53</i><i>18 : 05</i><i>13 : 14</i><i></i></div>
<div class="r d"><b>D</b><b>20</b><i>05 : 53</i><i>18 : 04</i><i>14 : 02</i><i>00 : 27</i></div>
<div class="r"><b>L</b><b>21</b><i>05 : 53</i><i>18 : 04</i><i>14 : 46</i><i>01 : 21</i></div>
<div class="r"><b>M</b><b>22</b><i>05 : 53</i><i>18 : 03</i><i>15 : 27</i><i>02 : 14</i></div>
<div class="r"><b>M</b><b>23</b><i>05 : 53</i><i>18 : 02</i><i>16 : 05</i><i>03 : 06</i></div>
<div class="r"><b>J</b><b>24</b><i>05 : 54</i><i>18 : 01</i><i>16 : 42</i><i>03 : 58</i></div>
<div class="r"><b>V</b><b>25</b><i>05 : 54</i><i>18 : 00</i><i>17 : 19</i><i>04 : 49</i></div>
<div class="r s"><b>S</b><b>26</b><i>05 : 54</i><i>18 : 00</i><i>17 : 56</i><i>05 : 42</i></div>
<div class="r d"><b>D</b><b>27</b><i>05 : 54</i><i>17 : 59</i><i>18 : 35</i><i>06 : 35</i></div>
<div class="r"><b>L</b><b>28</b><i>05 : 54</i><i>17 : 58</i><i>19 : 19</i><i>07 : 33</i></div>
<div class="r"><b>M</b><b>29</b><i>05 : 54</i><i>17 : 57</i><i>20 : 07</i><i>08 : 32</i></div>
<div class="r"><b>M</b><b>30</b><i>05 : 54</i><i>17 : 57</i><i>21 : 01</i><i>09 : 36</i></div>
<div class="lg">
<div><span class="ic dq"></span>DERNIER QUARTIER le 04</div>
<div><span class="ic nl"></span>NOUVELLE LUNE le 10</div>
<div><span class="ic pq"></span>PREMIER QUARTIER le 18</div>
<div><span class="ic pl"></span>PLEINE LUNE le 26</div>
</div>
</section>

<section class="m">
<div class="mt">OCTOBRE</div>
<div class="h"><div class="dt">Dates</div><div class="so">Soleil</div><div class="lu">Lune</div><div class="lc">L</div><div class="lc">C</div><div class="lc">L</div><div class="lc">C</div></div>
<div class="r"><b>J</b><b>1</b><i>05 : 54</i><i>17 : 56</i><i>22 : 00</i><i>10 : 40</i></div>
<div class="r"><b>V</b><b>2</b><i>05 : 55</i><i>17 : 55</i><i>23 : 03</i><i>11 : 44</i></div>
<div class="r s"><b>S</b><b>3</b><i>05 : 55</i><i>17 : 54</i><i></i><i>12 : 44</i></div>
<div class="r d"><b>D</b><b>4</b><i>05 : 55</i><i>17 : 53</i><i>00 : 07</i><i>13 : 39</i></div>
<div class="r"><b>L</b><b>5</b><i>05 : 55</i><i>17 : 53</i><i>01 : 11</i><i>14 : 27</i></div>
<div class="r"><b>M</b><b>6</b><i>05 : 55</i><i>17 : 52</i><i>02 : 10</i><i>15 : 11</i></div>
<div class="r"><b>M</b><b>7</b><i>05 : 55</i><i>17 : 51</i><i>03 : 08</i><i>15 : 51</i></div>
<div class="r"><b>J</b><b>8</b><i>05 : 55</i><i>17 : 50</i><i>04 : 02</i><i>16 : 29</i></div>
<div class="r"><b>V</b><b>9</b><i>05 : 56</i><i>17 : 50</i><i>04 : 55</i><i>17 : 06</i></div>
<div class="r s"><b>S</b><b>10</b><i>05 : 56</i><i>17 : 49</i><i>05 : 47</i><i>17 : 43</i></div>
<div class="r d"><b>D</b><b>11</b><i>05 : 56</i><i>17 : 48</i><i>06 : 39</i><i>18 : 22</i></div>
<div class="r"><b>L</b><b>12</b><i>05 : 56</i><i>17 : 48</i><i>07 : 33</i><i>19 : 04</i></div>
<div class="r"><b>M</b><b>13</b><i>05 : 56</i><i>17 : 47</i><i>08 : 26</i><i>19 : 48</i></div>
<div class="r"><b>M</b><b>14</b><i>05 : 57</i><i>17 : 46</i><i>09 : 21</i><i>20 : 35</i></div>
<div class="r"><b>J</b><b>15</b><i>05 : 57</i><i>17 : 46</i><i>10 : 14</i><i>21 : 26</i></div>
<div class="r"><b>V</b><b>16</b><i>05 : 57</i><i>17 : 45</i><i>11 : 06</i><i>22 : 18</i></div>
<div class="r s"><b>S</b><b>17</b><i>05 : 57</i><i>17 : 44</i><i>11 : 54</i><i>23 : 11</i></div>
<div class="r d"><b>D</b><b>18</b><i>05 : 57</i><i>17 : 44</i><i>12 : 39</i><i></i></div>
<div class="r"><b>L</b><b>19</b><i>05 : 58</i><i>17 : 43</i><i>13 : 21</i><i>00 : 03</i></div>
<div class="r"><b>M</b><b>20</b><i>05 : 58</i><i>17 : 43</i><i>14 : 00</i><i>00 : 55</i></div>
<div class="r"><b>M</b><b>21</b><i>05 : 58</i><i>17 : 42</i><i>14 : 37</i><i>01 : 47</i></div>
<div class="r"><b>J</b><b>22</b><i>05 : 58</i><i>17 : 41</i><i>15 : 13</i><i>02 : 37</i></div>
<div class="r"><b>V</b><b>23</b><i>05 : 59</i><i>17 : 41</i><i>15 : 50</i><i>03 : 29</i></div>
<div class="r s"><b>S</b><b>24</b><i>05 : 59</i><i>17 : 40</i><i>16 : 29</i><i>04 : 22</i></div>
<div class="r d"><b>D</b><b>25</b><i>05 : 59</i><i>17 : 40</i><i>17 : 11</i><i>05 : 18</i></div>
<div class="r"><b>L</b><b>26</b><i>06 : 00</i><i>17 : 39</i><i>17 : 58</i><i>06 : 18</i></div>
<div class="r"><b>M</b><b>27</b><i>06 : 00</i><i>17 : 39</i><i>18 : 51</i><i>07 : 22</i></div>
<div class="r"><b>M</b><b>28</b><i>06 : 00</i><i>17 : 38</i><i>19 : 51</i><i>08 : 28</i></div>
<div class="r"><b>J</b><b>29</b><i>06 : 01</i><i>17 : 38</i><i>20 : 55</i><i>09 : 35</i></div>
<div class="r"><b>V</b><b>30</b><i>06 : 01</i><i>17 : 37</i><i>22 : 00</i><i>10 : 38</i></div>
<div class="r s"><b>S</b><b>31</b><i>06 : 01</i><i>17 : 37</i><i>23 : 05</i><i>11 : 35</i></div>
<div class="lg">
<div><span class="ic dq"></span>DERNIER QUARTIER le 03</div>
<div><span class="ic nl"></span>NOUVELLE LUNE le 10</div>
<div><span class="ic pq"></span>PREMIER QUARTIER le 18</div>
<div><span class="ic pl"></span>PLEINE LUNE le 26</div>
</div>
</section>

<section class="m">
<div class="mt">NOVEMBRE</div>
<div class="h"><div class="dt">Dates</div><div class="so">Soleil</div><div class="lu">Lune</div><div class="lc">L</div><div class="lc">C</div><div class="lc">L</div><div class="lc">C</div></div>
<div class="r d"><b>D</b><b>1</b><i>06 : 02</i><i>17 : 36</i><i></i><i>12 : 26</i></div>
<div class="r"><b>L</b><b>2</b><i>06 : 02</i><i>17 : 36</i><i>00 : 06</i><i>13 : 11</i></div>
<div class="r"><b>M</b><b>3</b><i>06 : 02</i><i>17 : 36</i><i>01 : 03</i><i>13 : 51</i></div>
<div class="r"><b>M</b><b>4</b><i>06 : 03</i><i>17 : 35</i><i>01 : 57</i><i>14 : 29</i></div>
<div class="r"><b>J</b><b>5</b><i>06 : 03</i><i>17 : 35</i><i>02 : 49</i><i>15 : 05</i></div>
<div class="r"><b>V</b><b>6</b><i>06 : 04</i><i>17 : 35</i><i>03 : 41</i><i>15 : 42</i></div>
<div class="r s"><b>S</b><b>7</b><i>06 : 04</i><i>17 : 34</i><i>04 : 32</i><i>16 : 19</i></div>
<div class="r d"><b>D</b><b>8</b><i>06 : 04</i><i>17 : 34</i><i>05 : 25</i><i>17 : 00</i></div>
<div class="r"><b>L</b><b>9</b><i>06 : 05</i><i>17 : 34</i><i>06 : 17</i><i>17 : 43</i></div>
<div class="r"><b>M</b><b>10</b><i>06 : 05</i><i>17 : 33</i><i>07 : 12</i><i>18 : 29</i></div>
<div class="r"><b>M</b><b>11</b><i>06 : 06</i><i>17 : 33</i><i>08 : 06</i><i>19 : 19</i></div>
<div class="r"><b>J</b><b>12</b><i>06 : 06</i><i>17 : 33</i><i>08 : 58</i><i>20 : 10</i></div>
<div class="r"><b>V</b><b>13</b><i>06 : 07</i><i>17 : 33</i><i>09 : 48</i><i>21 : 03</i></div>
<div class="r s"><b>S</b><b>14</b><i>06 : 07</i><i>17 : 33</i><i>10 : 34</i><i>21 : 55</i></div>
<div class="r d"><b>D</b><b>15</b><i>06 : 08</i><i>17 : 33</i><i>11 : 17</i><i>22 : 46</i></div>
<div class="r"><b>L</b><b>16</b><i>06 : 08</i><i>17 : 32</i><i>11 : 56</i><i>23 : 37</i></div>
<div class="r"><b>M</b><b>17</b><i>06 : 09</i><i>17 : 32</i><i>12 : 32</i><i></i></div>
<div class="r"><b>M</b><b>18</b><i>06 : 09</i><i>17 : 32</i><i>13 : 08</i><i>00 : 26</i></div>
<div class="r"><b>J</b><b>19</b><i>06 : 10</i><i>17 : 32</i><i>13 : 44</i><i>01 : 16</i></div>
<div class="r"><b>V</b><b>20</b><i>06 : 10</i><i>17 : 32</i><i>14 : 20</i><i>02 : 07</i></div>
<div class="r s"><b>S</b><b>21</b><i>06 : 11</i><i>17 : 32</i><i>15 : 00</i><i>03 : 01</i></div>
<div class="r d"><b>D</b><b>22</b><i>06 : 11</i><i>17 : 32</i><i>15 : 45</i><i>03 : 58</i></div>
<div class="r"><b>L</b><b>23</b><i>06 : 12</i><i>17 : 32</i><i>16 : 35</i><i>05 : 00</i></div>
<div class="r"><b>M</b><b>24</b><i>06 : 12</i><i>17 : 32</i><i>17 : 33</i><i>06 : 06</i></div>
<div class="r"><b>M</b><b>25</b><i>06 : 13</i><i>17 : 32</i><i>18 : 37</i><i>07 : 15</i></div>
<div class="r"><b>J</b><b>26</b><i>06 : 14</i><i>17 : 32</i><i>19 : 45</i><i>08 : 22</i></div>
<div class="r"><b>V</b><b>27</b><i>06 : 14</i><i>17 : 32</i><i>20 : 53</i><i>09 : 25</i></div>
<div class="r s"><b>S</b><b>28</b><i>06 : 15</i><i>17 : 32</i><i>21 : 57</i><i>10 : 20</i></div>
<div class="r d"><b>D</b><b>29</b><i>06 : 15</i><i>17 : 32</i><i>22 : 58</i><i>11 : 08</i></div>
<div class="r"><b>L</b><b>30</b><i>06 : 16</i><i>17 : 33</i><i>23 : 54</i><i>11 : 51</i></div>
<div class="lg">
<div><span class="ic dq"></span>DERNIER QUARTIER le 01</div>
<div><span class="ic nl"></span>NOUVELLE LUNE le 09</div>
<div><span class="ic pq"></span>PREMIER QUARTIER le 17</div>
<div><span class="ic pl"></span>PLEINE LUNE le 24</div>
</div>
</section>

<section class="m">
<div class="mt">DÉCEMBRE</div>
<div class="h"><div class="dt">Dates</div><div class="so">Soleil</div><div class="lu">Lune</div><div class="lc">L</div><div class="lc">C</div><div class="lc">L</div><div class="lc">C</div></div>
<div class="r"><b>M</b><b>1</b><i>06 : 16</i><i>17 : 33</i><i></i><i>12 : 29</i></div>
<div class="r"><b>M</b><b>2</b><i>06 : 17</i><i>17 : 33</i><i>00 : 47</i><i>13 : 07</i></div>
<div class="r"><b>J</b><b>3</b><i>06 : 18</i><i>17 : 33</i><i>01 : 38</i><i>13 : 43</i></div>
<div class="r"><b>V</b><b>4</b><i>06 : 18</i><i>17 : 33</i><i>02 : 28</i><i>14 : 19</i></div>
<div class="r s"><b>S</b><b>5</b><i>06 : 19</i><i>17 : 34</i><i>03 : 20</i><i>14 : 58</i></div>
<div class="r d"><b>D</b><b>6</b><i>06 : 19</i><i>17 : 34</i><i>04 : 12</i><i>15 : 40</i></div>
<div class="r"><b>L</b><b>7</b><i>06 : 20</i><i>17 : 34</i><i>05 : 06</i><i>16 : 25</i></div>
<div class="r"><b>M</b><b>8</b><i>06 : 20</i><i>17 : 34</i><i>05 : 59</i><i>17 : 14</i></div>
<div class="r"><b>M</b><b>9</b><i>06 : 21</i><i>17 : 35</i><i>06 : 52</i><i>18 : 04</i></div>
<div class="r"><b>J</b><b>10</b><i>06 : 22</i><i>17 : 35</i><i>07 : 43</i><i>18 : 57</i></div>
<div class="r"><b>V</b><b>11</b><i>06 : 22</i><i>17 : 35</i><i>08 : 30</i><i>19 : 50</i></div>
<div class="r s"><b>S</b><b>12</b><i>06 : 23</i><i>17 : 36</i><i>09 : 14</i><i>20 : 41</i></div>
<div class="r d"><b>D</b><b>13</b><i>06 : 23</i><i>17 : 36</i><i>09 : 54</i><i>21 : 31</i></div>
<div class="r"><b>L</b><b>14</b><i>06 : 24</i><i>17 : 37</i><i>10 : 31</i><i>22 : 20</i></div>
<div class="r"><b>M</b><b>15</b><i>06 : 24</i><i>17 : 37</i><i>11 : 06</i><i>23 : 09</i></div>
<div class="r"><b>M</b><b>16</b><i>06 : 25</i><i>17 : 37</i><i>11 : 41</i><i>23 : 57</i></div>
<div class="r"><b>J</b><b>17</b><i>06 : 25</i><i>17 : 38</i><i>12 : 15</i><i></i></div>
<div class="r"><b>V</b><b>18</b><i>06 : 26</i><i>17 : 38</i><i>12 : 52</i><i>00 : 48</i></div>
<div class="r s"><b>S</b><b>19</b><i>06 : 27</i><i>17 : 39</i><i>13 : 33</i><i>01 : 42</i></div>
<div class="r d"><b>D</b><b>20</b><i>06 : 27</i><i>17 : 39</i><i>14 : 19</i><i>02 : 39</i></div>
<div class="r"><b>L</b><b>21</b><i>06 : 28</i><i>17 : 40</i><i>15 : 12</i><i>03 : 42</i></div>
<div class="r"><b>M</b><b>22</b><i>06 : 28</i><i>17 : 40</i><i>16 : 13</i><i>04 : 49</i></div>
<div class="r"><b>M</b><b>23</b><i>06 : 29</i><i>17 : 41</i><i>17 : 20</i><i>05 : 58</i></div>
<div class="r"><b>J</b><b>24</b><i>06 : 29</i><i>17 : 41</i><i>18 : 30</i><i>07 : 04</i></div>
<div class="r"><b>V</b><b>25</b><i>06 : 29</i><i>17 : 42</i><i>19 : 39</i><i>08 : 05</i></div>
<div class="r s"><b>S</b><b>26</b><i>06 : 30</i><i>17 : 42</i><i>20 : 43</i><i>08 : 58</i></div>
<div class="r d"><b>D</b><b>27</b><i>06 : 30</i><i>17 : 43</i><i>21 : 44</i><i>09 : 45</i></div>
<div class="r"><b>L</b><b>28</b><i>06 : 31</i><i>17 : 43</i><i>22 : 40</i><i>10 : 27</i></div>
<div class="r"><b>M</b><b>29</b><i>06 : 31</i><i>17 : 44</i><i>23 : 33</i><i>11 : 06</i></div>
<div class="r"><b>M</b><b>30</b><i>06 : 32</i><i>17 : 45</i><i></i><i>11 : 43</i></div>
<div class="r"><b>J</b><b>31</b><i>06 : 32</i><i>17 : 45</i><i>00 : 25</i><i>12 : 20</i></div>
<div class="lg">
<div><span class="ic dq"></span>DERNIER QUARTIER le 01</div>
<div><span class="ic nl"></span>NOUVELLE LUNE le 08</div>
<div><span class="ic pq"></span>PREMIER QUARTIER le 17</div>
<div><span class="ic pl"></span>PLEINE LUNE le 23</div>
<div><span class="ic dq"></span>DERNIER QUARTIER le 30</div>
</div>
</section>

</main>
<footer class="foot">Les heures sont locales, elles tiennent compte du lieu de la commune mais aussi du fuseau horaire de celle-ci.</footer>
</body>
</html>
```

FILE: styles.css
```css
* { box-sizing: border-box; margin: 0; padding: 0; }
html, body { background: #fff; }
body {
  width: 2480px;
  min-height: 3508px;
  font-family: "Liberation Sans", Arial, sans-serif;
  color: #000;
}

.top { height: 307px; padding: 61px 0 0 72px; }
.title {
  font-family: "Open Sans", sans-serif;
  font-weight: 700;
  font-stretch: 75%;
  font-size: 97px;
  line-height: 97px;
  letter-spacing: -1.45px;
  white-space: nowrap;
  color: #000;
}
.sub {
  font-family: "Open Sans", sans-serif;
  font-style: italic;
  font-weight: 300;
  font-size: 40px;
  line-height: 40px;
  margin: 33px 0 0 32px;
  white-space: nowrap;
}

.cal {
  display: grid;
  grid-template-columns: repeat(6, 356px);
  column-gap: 46px;
  row-gap: 55px;
  padding-left: 57px;
  align-items: start;
}

.m {
  background: #ececec;
  padding: 3px;
  display: flex;
  flex-direction: column;
}
.mt {
  background: #fff;
  height: 77px;
  display: flex;
  align-items: center;
  justify-content: center;
  font-family: "Open Sans", sans-serif;
  font-weight: 800;
  font-size: 43px;
  color: #2f62c8;
}
.h {
  display: grid;
  grid-template-columns: 34px 34px 68px 68px 68px 68px;
  grid-template-rows: 57px 56px;
  column-gap: 2px;
  row-gap: 3px;
  margin: 3px 0 2px;
}
.h > div {
  background: #fff;
  display: flex;
  align-items: center;
  justify-content: center;
  color: #2f62c8;
  font-size: 24px;
}
.h .dt { grid-column: 1 / 3; grid-row: 1 / 3; }
.h .so { grid-column: 3 / 5; }
.h .lu { grid-column: 5 / 7; }
.h .lc { font-weight: bold; font-size: 25px; }

.r {
  display: grid;
  grid-template-columns: 34px 34px 68px 68px 68px 68px;
  column-gap: 2px;
  height: 35.45px;
}
.r > * {
  background: #fff;
  display: flex;
  align-items: center;
  justify-content: center;
  white-space: nowrap;
}
.r b { font-size: 25px; font-weight: bold; color: #000; }
.r b:first-child { font-weight: normal; }
.r i {
  font-style: normal;
  font-family: "Open Sans", sans-serif;
  font-weight: 300;
  font-stretch: 75%;
  font-size: 26px;
  color: #4c5866;
}
.r.s > * { background: #e5e7fa; }
.r.d > * { background: #80acf4; }
.r.d b, .r.d b:first-child { color: #fff; font-weight: bold; }

.lg { display: flex; flex-direction: column; gap: 3px; }
.lg > div {
  background: #fff;
  height: 33px;
  display: flex;
  align-items: center;
  padding-left: 7px;
  font-weight: bold;
  font-size: 20px;
  white-space: nowrap;
}
.ic {
  width: 18px;
  height: 18px;
  border-radius: 50%;
  border: 1.5px solid #000;
  margin-right: 22px;
  flex: none;
}
.ic.nl { background: #000; }
.ic.dq { background: linear-gradient(to right, #fff 45%, #000 45%); }
.ic.pq { background: linear-gradient(to right, #000 55%, #fff 55%); }

.foot {
  margin-top: 63px;
  text-align: center;
  font-size: 29px;
  line-height: 1;
}
```
